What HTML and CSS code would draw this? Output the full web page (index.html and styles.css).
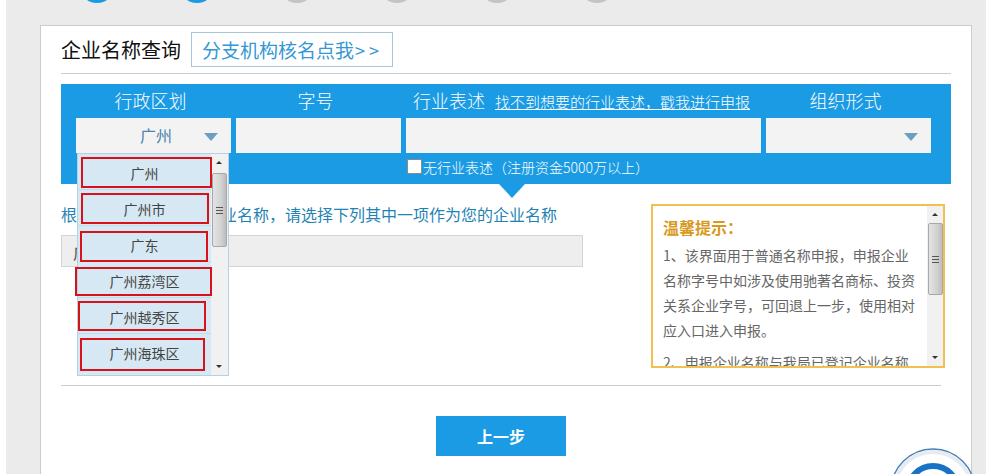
FILE: index.html
```html
<!DOCTYPE html>
<html lang="zh-CN">
<head>
<meta charset="utf-8">
<title>企业名称查询</title>
<link rel="stylesheet" href="styles.css">
</head>
<body>
<div class="page">
  <div class="steps">
    <span class="dot on"></span><span class="dot on"></span><span class="dot"></span><span class="dot"></span><span class="dot"></span><span class="dot"></span>
  </div>
  <main class="card">
    <div class="head">
      <h1 class="title">企业名称查询</h1>
      <a class="branch">分支机构核名点我<span class="gt">&gt;&gt;</span></a>
    </div>
    <section class="panel">
      <div class="labels">
        <div class="c1">行政区划</div>
        <div class="c2">字号</div>
        <div class="c3">行业表述<a class="report">找不到想要的行业表述，戳我进行申报</a></div>
        <div class="c4">组织形式</div>
      </div>
      <div class="fields">
        <div class="field c1 sel"><span class="val">广州</span><i class="caret"></i></div>
        <div class="field c2"></div>
        <div class="field c3"></div>
        <div class="field c4 sel"><i class="caret"></i></div>
      </div>
      <label class="nocheck"><span class="box"></span>无行业表述（注册资金5000万以上）</label>
      <i class="pointer"></i>
      <div class="drop">
        <ul class="opts">
          <li>广州</li><li>广州市</li><li>广东</li><li>广州荔湾区</li><li>广州越秀区</li><li>广州海珠区</li>
        </ul>
        <div class="sb"><b class="up"></b><div class="thumb"><s></s></div><b class="down"></b></div>
        <span class="mark m1"></span><span class="mark m2"></span><span class="mark m3"></span>
        <span class="mark m4"></span><span class="mark m5"></span><span class="mark m6"></span>
      </div>
    </section>
    <div class="result">
      <div class="left">
        <p class="hint">根据您填写的信息及企业名称，请选择下列其中一项作为您的企业名称</p>
        <div class="name">广州</div>
      </div>
      <aside class="tips">
        <div class="tips-body">
          <h2>温馨提示：</h2>
          <p>1、该界面用于普通名称申报，申报企业名称字号中如涉及使用驰著名商标、投资关系企业字号，可回退上一步，使用相对应入口进入申报。</p>
          <p>2、申报企业名称与我局已登记企业名称</p>
        </div>
        <div class="sb"><b class="up"></b><div class="thumb"><s></s></div><b class="down"></b></div>
      </aside>
    </div>
    <div class="foot"><button class="prev">上一步</button></div>
  </main>
  <svg class="badge" width="90" height="90" viewBox="0 0 90 90"><circle cx="45" cy="45" r="42" fill="#fff" stroke="#4a7fb5" stroke-width="1.5"/><circle cx="45" cy="45" r="39" fill="none" stroke="#e6ebf1" stroke-width="4"/><circle cx="45" cy="45" r="25" fill="none" stroke="#1a72c4" stroke-width="6"/></svg>
</div>
</body>
</html>
```
FILE: styles.css
```css
* { box-sizing: border-box; }
html, body { margin: 0; height: 474px; overflow: hidden; }
body { background: #fff; padding-left: 6px; font-family: "Noto Sans CJK SC", "Noto Sans", sans-serif; }
.page { position: relative; height: 474px; background: #ebebeb; overflow: hidden; }

.steps { display: flex; gap: 64px; height: 25px; padding-left: 73px; }
.dot { width: 36px; height: 36px; margin-top: -33px; border-radius: 50%; background: #c4c4c4; }
.dot.on { background: #1a9be3; }

.card { width: 932px; height: 460px; margin-left: 34px; padding: 6px 20px 0; background: #fff; border: 1px solid #ccc; }
.head { display: flex; align-items: center; gap: 10px; width: 890px; height: 42px; margin-bottom: 10px; padding-bottom: 6px; border-bottom: 1px solid #ccc; }
.title { margin: 0; font-size: 20px; font-weight: 400; line-height: 35px; color: #111; }
.branch { display: flex; align-items: center; flex: none; width: 202px; height: 35px; padding: 0 10px; border: 1px solid #a9c6d8; font-size: 19px; color: #3597d3; white-space: nowrap; }
.gt { flex: none; font-size: 18px; letter-spacing: 4px; margin-left: 1px; }

.panel { position: relative; width: 890px; height: 100px; background: #1a9be3; padding: 0 20px 0 15px; color: #fff; }
.labels { display: flex; gap: 5px; height: 34px; margin-left: -3px; font-size: 18px; line-height: 32px; text-align: center; font-weight: 300; }
.c1 { width: 155px; }
.c2 { width: 165px; }
.c3 { width: 355px; text-align: left; padding-left: 8px; white-space: nowrap; }
.labels .c3 { padding-left: 10px; }
.c4 { width: 165px; }
.report { margin-left: 10px; font-size: 15px; text-decoration: underline; color: #fff; }
.fields { display: flex; gap: 5px; height: 35px; }
.field { background: #f3f3f3; position: relative; padding: 0; }
.val { display: block; width: 160px; text-align: center; color: #4a86ad; font-size: 16px; line-height: 35px; }
.caret { position: absolute; right: 13px; top: 15px; width: 0; height: 0; border-left: 7px solid transparent; border-right: 7px solid transparent; border-top: 8px solid #6b9fc0; }
.nocheck { display: flex; align-items: center; height: 27px; margin-left: 331px; font-size: 14px; color: #fff; font-weight: 300; white-space: nowrap; }
.box { width: 15px; height: 15px; margin-right: 1px; background: #fff; border: 1px solid #8a8a8a; flex: none; }
.pointer { position: absolute; left: 438px; top: 100px; width: 0; height: 0; border-left: 13px solid transparent; border-right: 13px solid transparent; border-top: 14px solid #1a9be3; }

.drop { position: absolute; z-index: 2; left: 16px; top: 69px; width: 152px; height: 223px; display: flex; background: #d6e8f3; border: 1px solid #b4d2e4; }
.drop .thumb { margin-top: 2px; }
.opts { list-style: none; margin: 0; padding: 0; width: 135px; color: #444; font-size: 14px; text-align: center; }
.opts li { height: 36px; line-height: 38px; border-bottom: 1px solid #c2dcec; }
.opts li:last-child { border-bottom: 0; }
.sb { display: flex; flex-direction: column; align-items: center; width: 17px; background: #f1f1f1; }
.sb .up, .sb .down { flex: none; width: 100%; height: 17px; position: relative; }
.sb .up::after, .sb .down::after { content: ""; position: absolute; left: 5px; top: 7px; width: 0; height: 0; border-left: 3px solid transparent; border-right: 3px solid transparent; }
.sb .up::after { border-bottom: 3px solid #333; }
.sb .down::after { border-top: 3px solid #333; }
.thumb { width: 15px; height: 74px; background: linear-gradient(90deg, #e4e4e4, #d2d2d2 60%, #bcbcbc); border: 1px solid #a8a8a8; border-radius: 2px; display: flex; align-items: center; justify-content: center; }
.thumb s { display: block; width: 7px; height: 7px; border-top: 1px solid #555; border-bottom: 1px solid #555; background: linear-gradient(#555, #555) center / 100% 1px no-repeat; }
.sb .down { margin-top: auto; }
.mark { position: absolute; border: 2px solid #d8121a; }
.m1 { left: 3px; top: 3px; width: 131px; height: 31px; }
.m2 { left: 3px; top: 39px; width: 128px; height: 31px; }
.m3 { left: 2px; top: 77px; width: 128px; height: 31px; }
.m4 { left: -3px; top: 113px; width: 137px; height: 29px; }
.m5 { left: 0; top: 147px; width: 128px; height: 30px; }
.m6 { left: 2px; top: 184px; width: 125px; height: 33px; }

.result { display: flex; width: 890px; height: 201px; padding-top: 20px; }
.left { width: 590px; }
.hint { margin: 0 0 10px; font-size: 16px; line-height: 21px; color: #1f83b4; white-space: nowrap; }
.name { width: 522px; height: 32px; background: #eee; border: 1px solid #d4d4d4; padding-left: 11px; font-size: 16px; line-height: 32px; color: #555; }
.tips { display: flex; width: 294px; height: 164px; border: 2px solid #f0c050; background: #fff; overflow: hidden; }
.tips-body { width: 274px; padding: 0 10px; overflow: hidden; color: #666; font-size: 14px; line-height: 25px; }
.tips h2 { margin: 8px 0 2px; font-size: 16px; line-height: 27px; font-weight: 700; color: #d79a1e; }
.tips p { margin: 0 0 7px; }
.tips .sb { width: 16px; }
.tips .thumb { height: 72px; }

.foot { width: 880px; padding-top: 30px; border-top: 1px solid #ccc; display: flex; justify-content: center; }
.prev { width: 130px; height: 40px; padding: 0; border: 0; background: #1a9be3; color: #fff; font-family: "Noto Sans CJK SC", sans-serif; font-weight: 700; font-size: 16px; }

.badge { position: absolute; left: 882px; top: 446px; }
```
